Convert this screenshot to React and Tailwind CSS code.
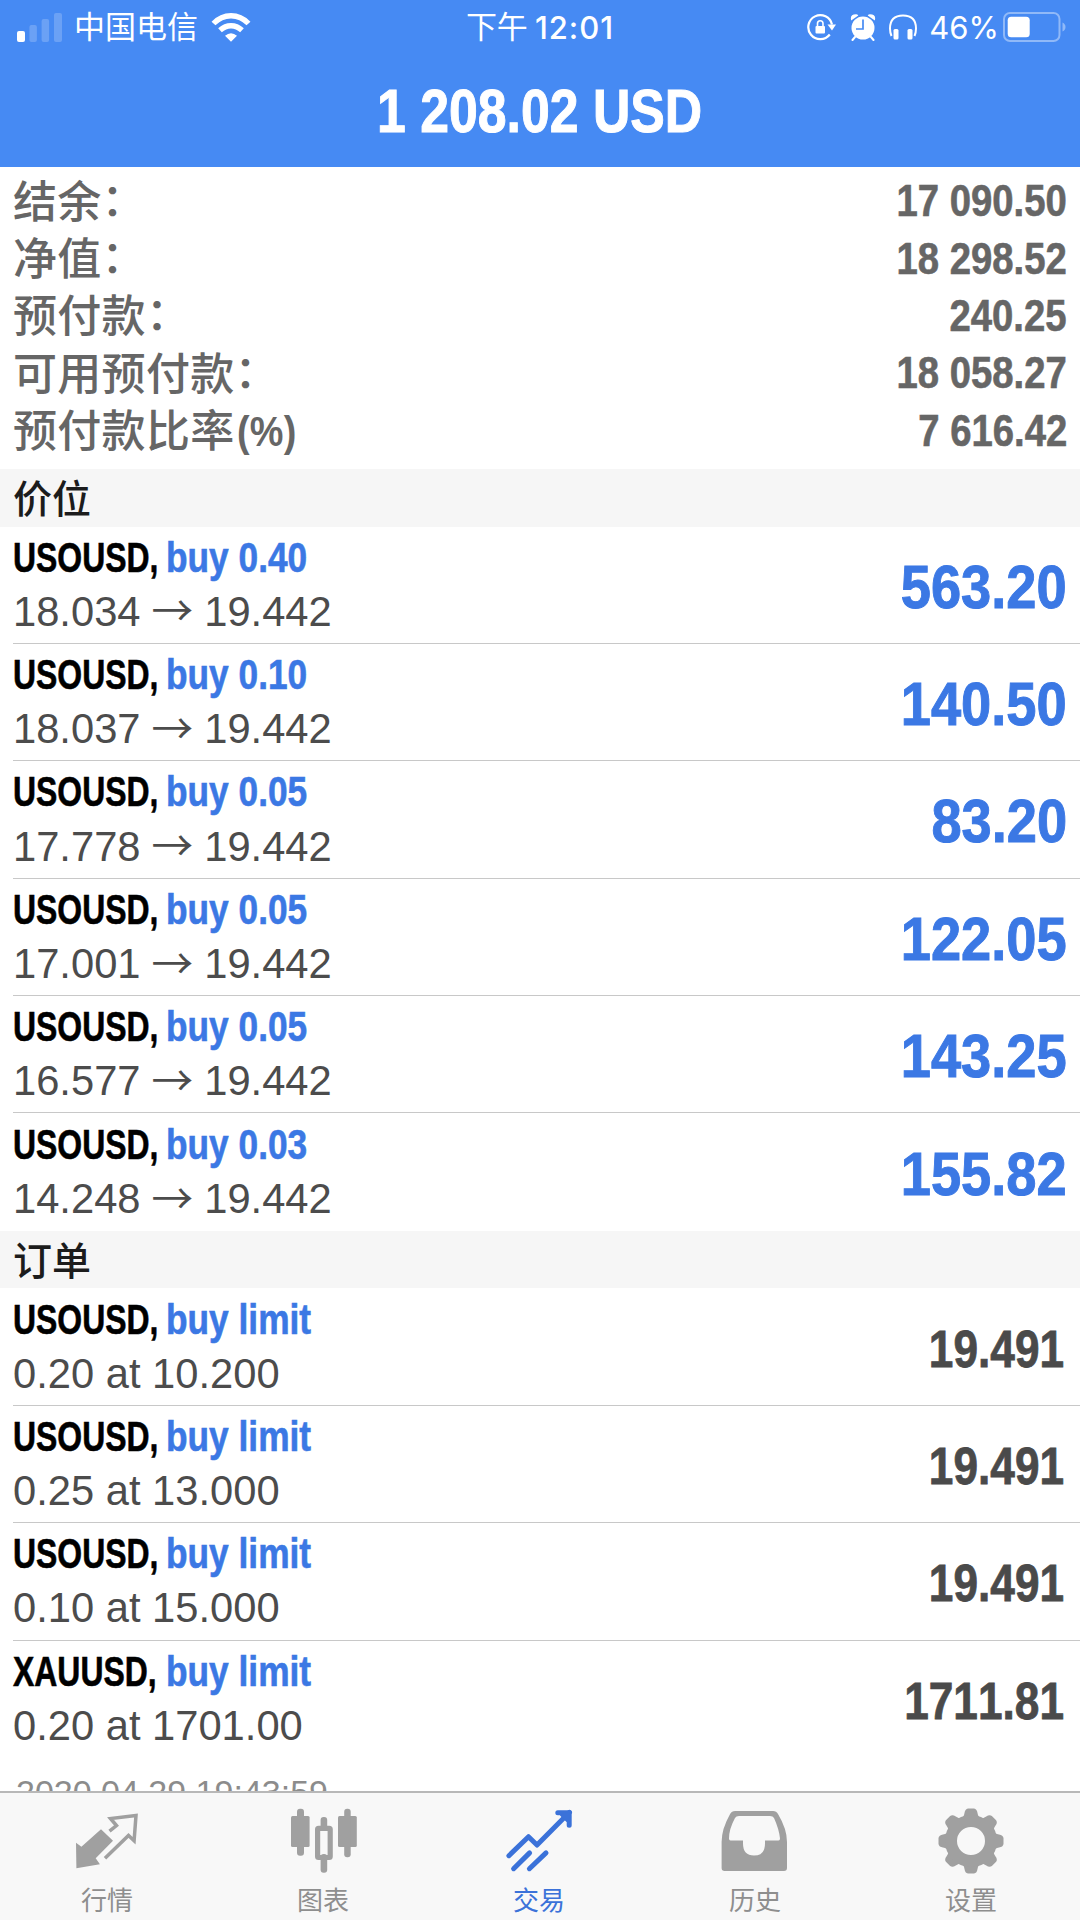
const balances = [
  { label: '结余', suffix: '：', value: '17 090.50' },
  { label: '净值', suffix: '：', value: '18 298.52' },
  { label: '预付款', suffix: '：', value: '240.25' },
  { label: '可用预付款', suffix: '：', value: '18 058.27' },
  { label: '预付款比率', suffix: '(%)', value: '7 616.42' },
];

const positions = [
  { id: 1, symbol: 'USOUSD', side: 'buy 0.40', open: '18.034', current: '19.442', profit: '563.20' },
  { id: 2, symbol: 'USOUSD', side: 'buy 0.10', open: '18.037', current: '19.442', profit: '140.50' },
  { id: 3, symbol: 'USOUSD', side: 'buy 0.05', open: '17.778', current: '19.442', profit: '83.20' },
  { id: 4, symbol: 'USOUSD', side: 'buy 0.05', open: '17.001', current: '19.442', profit: '122.05' },
  { id: 5, symbol: 'USOUSD', side: 'buy 0.05', open: '16.577', current: '19.442', profit: '143.25' },
  { id: 6, symbol: 'USOUSD', side: 'buy 0.03', open: '14.248', current: '19.442', profit: '155.82' },
];

const orders = [
  { id: 1, symbol: 'USOUSD', side: 'buy limit', detail: '0.20 at 10.200', price: '19.491' },
  { id: 2, symbol: 'USOUSD', side: 'buy limit', detail: '0.25 at 13.000', price: '19.491' },
  { id: 3, symbol: 'USOUSD', side: 'buy limit', detail: '0.10 at 15.000', price: '19.491' },
  { id: 4, symbol: 'XAUUSD', side: 'buy limit', detail: '0.20 at 1701.00', price: '1711.81' },
];

const QuotesIcon = () => (
  <svg viewBox="0 0 72 72" className="h-[72px] w-[72px]" fill="none">
    <path d="M4 38.7l5.4 4L29 25.3l12 11.4-17.3 17.6 4.2 6-23.5 4z" fill="currentColor" />
    <path
      d="M37.5 27.2l7-5.700-6-7L64 11.500l-1.900 25.300-5.600-5.300L33 54.200"
      stroke="currentColor"
      strokeWidth="3.5"
    />
  </svg>
);

const ChartIcon = () => (
  <svg viewBox="0 0 72 72" className="h-[72px] w-[72px]" fill="currentColor">
    <rect x="3" y="12" width="18.6" height="31" rx="1.5" />
    <rect x="9" y="4.7" width="7" height="47" rx="3" />
    <rect x="50" y="12" width="18.8" height="31" rx="1.5" />
    <rect x="56.2" y="4.7" width="6.5" height="48.6" rx="3" />
    <rect x="32.6" y="13" width="6.6" height="12" rx="3" />
    <rect x="32.6" y="50" width="6.6" height="18.7" rx="3" />
    <rect x="29.6" y="24.3" width="12.6" height="29.2" rx="1" fill="none" stroke="currentColor" strokeWidth="5.2" />
  </svg>
);

const TradeIcon = () => (
  <svg
    viewBox="0 0 72 72"
    className="h-[72px] w-[72px]"
    fill="none"
    stroke="currentColor"
    strokeWidth="5"
    strokeLinecap="round"
    strokeLinejoin="round"
  >
    <path d="M4.9 51.7L24.5 32.7l8.500 8.300L65.500 8.300" />
    <path d="M53.800 8.800h11.400v12.400M58 10l6 6" />
    <path d="M9.600 64.700l16-15.800M25.400 64.700L42 48.900" />
  </svg>
);

const HistoryIcon = () => (
  <svg viewBox="0 0 72 72" className="h-[72px] w-[72px]" fill="currentColor" fillRule="evenodd">
    <path d="M18.500 7h34.500q3.500 0 5 3 9 15 9 28v26q0 3-3 3H4.600q-3 0-3-3V38q0-13 8.500-28 1.500-3 5-3zM19 12q-3 0-4 2-6 11-6 20.500 0 2 1.500 2h12.500v3q0 12 11 12t11-12v-3h13.500q1.500 0 1.500-2-1-9.500-6-20.500-1-2-4-2z" />
  </svg>
);

const SettingsIcon = () => (
  <svg viewBox="0 0 72 72" className="h-[72px] w-[72px]">
    <g fill="currentColor">
      {[0, 45, 90, 135, 180, 225, 270, 315].map((angle) => (
        <path
          key={angle}
          transform={`rotate(${angle} 35 37)`}
          d="M24 16q4-3 4.500-7 .5-4 3.500-4.500h6q3 .5 3.500 4.500 .5 4 4.500 7z"
        />
      ))}
    </g>
    <circle cx="35" cy="37" r="20" fill="none" stroke="currentColor" strokeWidth="12" />
  </svg>
);

const tabs = [
  { label: '行情', icon: QuotesIcon },
  { label: '图表', icon: ChartIcon },
  { label: '交易', icon: TradeIcon, active: true },
  { label: '历史', icon: HistoryIcon },
  { label: '设置', icon: SettingsIcon },
];

const SignalIcon = () => (
  <svg viewBox="0 0 45 30" className="h-[30px] w-[45px]" fill="white">
    <rect x="0" y="19" width="8" height="11" rx="2" />
    <rect x="12.400" y="13" width="7.500" height="17" rx="2" opacity="0.2" />
    <rect x="24.600" y="7" width="7.500" height="23" rx="2" opacity="0.2" />
    <rect x="37" y="1" width="8" height="29" rx="2" opacity="0.2" />
  </svg>
);

const WifiIcon = () => (
  <svg viewBox="0 0 40 30" className="h-[30px] w-[40px]" fill="none" stroke="white" strokeWidth="5.400">
    <path d="M2.500 11.500Q10 3.700 20 3.700t17.500 7.800" />
    <path d="M9 18.300q5-4.600 11-4.600t11 4.600" />
    <path d="M14 23.800q6-5 12 0L20 29.800z" fill="white" stroke="none" />
  </svg>
);

const RotationLockIcon = () => (
  <svg viewBox="0 0 30 28" className="h-[28px] w-[30px]" fill="none" stroke="white">
    <path d="M22.800 21.500A12 12 0 1 1 25 11.500" strokeWidth="2.200" />
    <path d="M20.500 11.500h8.500l-4 6z" fill="white" stroke="none" />
    <rect x="8.500" y="13" width="9.500" height="7.500" rx="1" fill="white" stroke="none" />
    <path d="M10.500 13v-2.500a2.750 2.750 0 0 1 5.500 0V13" strokeWidth="1.600" />
  </svg>
);

const AlarmIcon = () => (
  <svg viewBox="0 0 26 28" className="h-[28px] w-[26px]" fill="white">
    <circle cx="13" cy="15" r="11.500" />
    <path d="M1.200 7.500Q-.5 1.500 6 1.300q1.600 0 2.300 1.200zM24.800 7.500Q26.500 1.500 20 1.300q-1.600 0-2.300 1.200z" />
    <path d="M5 24l-2.500 3M21 24l2.500 3" stroke="white" strokeWidth="2" strokeLinecap="round" />
    <path d="M13 6.500v9.500H6" fill="none" stroke="#468af3" strokeWidth="1.700" />
  </svg>
);

const HeadphonesIcon = () => (
  <svg viewBox="0 0 28 28" className="h-[28px] w-[28px]" fill="none" stroke="white">
    <path d="M2.500 23Q1 19.500 1 15.500 1 2.500 14 2.500t13 13q0 4-1.500 7.500" strokeWidth="2" />
    <rect x="4.500" y="16" width="5" height="10.500" rx="1.500" fill="white" stroke="none" />
    <rect x="18.500" y="16" width="5" height="10.500" rx="1.500" fill="white" stroke="none" />
  </svg>
);

const BatteryIcon = () => (
  <svg viewBox="0 0 64 30" className="h-[30px] w-[64px]">
    <rect x="1" y="1" width="55.500" height="28" rx="6" fill="none" stroke="white" strokeOpacity="0.4" strokeWidth="2" />
    <rect x="4.700" y="4.700" width="22" height="20.600" rx="3.500" fill="white" />
    <path d="M59.500 10.500q3 1.500 3 4.500t-3 4.500z" fill="white" opacity="0.4" />
  </svg>
);

const StatusBar = () => (
  <div className="flex h-[54px] items-center justify-between pl-[17px] pr-[13px] text-[31px] leading-none">
    <div className="flex w-[440px] items-center">
      <SignalIcon />
      <span className="ml-3 mr-[13px]">中国电信</span>
      <WifiIcon />
    </div>
    <div className="flex items-center pr-1">
      <span>下午</span>
      <span className="ml-[7px] font-['Inter'] font-medium tracking-[1px]">12:01</span>
    </div>
    <div className="flex w-[440px] items-center justify-end">
      <RotationLockIcon />
      <span className="ml-[13px]"><AlarmIcon /></span>
      <span className="ml-[13px]"><HeadphonesIcon /></span>
      <span className="ml-3 mr-[4px] font-['Inter']">46%</span>
      <BatteryIcon />
    </div>
  </div>
);

const SectionTitle = ({ children }) => (
  <h2 className="flex h-[57.500px] items-center bg-[#f6f6f6] pl-[13px] pt-[3px] text-[39px] font-medium leading-none text-[#1c1c1c]">
    {children}
  </h2>
);

const Row = ({ symbol, side, last, right, children }) => (
  <li className="flex h-[117.400px] pl-[13px]">
    <div className={`flex flex-1 items-center justify-between pr-[13px] ${last ? '' : 'border-b border-[#c8c8c8]'}`}>
      <div>
        <div className="flex h-[54px] items-center whitespace-nowrap text-[42px] font-bold leading-none [-webkit-text-stroke:0.6px_currentColor]">
          <div className="w-[153px]">
            <span className="block w-max origin-left scale-x-[0.76] text-black">{symbol},</span>
          </div>
          <span className="block origin-left scale-x-[0.84] text-[#3b78e4]">{side}</span>
        </div>
        <div className="flex h-[54px] items-center whitespace-nowrap text-[41.700px] leading-none text-[#4c4c4c]">{children}</div>
      </div>
      {right}
    </div>
  </li>
);

const TabBar = () => (
  <nav className="grid h-[129px] shrink-0 grid-cols-5 border-t-2 border-[#b8b8b8] bg-[#f8f8f8]">
    {tabs.map(({ label, icon: Icon, active }) => (
      <div
        key={label}
        className={`flex flex-col items-center pt-[11px] ${active ? 'text-[#3b72d9]' : 'text-[#a0a0a0]'}`}
      >
        <Icon />
        <span className={`mt-[12px] pr-[2px] text-[26px] leading-none ${active ? '' : 'text-[#8e8e8e]'}`}>{label}</span>
      </div>
    ))}
  </nav>
);

export default function App() {
  return (
    <div className="flex h-[1920px] w-[1080px] flex-col overflow-hidden bg-white font-['Liberation_Sans','Noto_Sans_CJK_SC',sans-serif] [font-kerning:none]">
      <header className="h-[167px] shrink-0 bg-[#468af3] text-white">
        <StatusBar />
        <h1 className="flex h-[113px] scale-x-[0.835] items-center justify-center pr-px text-[62px] font-bold leading-none [-webkit-text-stroke:1px_currentColor]">
          1 208.02 USD
        </h1>
      </header>

      <main className="min-h-0 flex-1 overflow-hidden">
        <dl className="h-[302px] px-[13px] pt-[5px] text-[44px] text-[#666]">
          {balances.map(({ label, suffix, value }) => (
            <div key={label} className="flex h-[57.400px] items-center justify-between leading-none">
              <dt className="flex items-center pt-[4px] font-medium tracking-[0.300px]">
                {label}
                {suffix === '：' ? (
                  <span className="mb-[4px]">{suffix}</span>
                ) : (
                  <span className="ml-[2px] origin-left scale-x-[0.9] text-[42px] font-bold">{suffix}</span>
                )}
              </dt>
              <dd className="origin-right scale-x-[0.87] pt-px font-bold [-webkit-text-stroke:0.6px_currentColor]">
                {value}
              </dd>
            </div>
          ))}
        </dl>

        <SectionTitle>价位</SectionTitle>
        <ul>
          {positions.map((p, i) => (
            <Row
              key={p.id}
              symbol={p.symbol}
              side={p.side}
              last={i === positions.length - 1}
              right={
                <span className="origin-right scale-x-[0.875] pt-1 text-[62px] font-bold leading-none text-[#3b78e4] [-webkit-text-stroke:1px_currentColor]">
                  {p.profit}
                </span>
              }
            >
              {p.open}
              <span className="mx-[11px] mb-[5px] font-['Noto_Sans_CJK_SC']">→</span>
              {p.current}
            </Row>
          ))}
        </ul>

        <SectionTitle>订单</SectionTitle>
        <ul>
          {orders.map((o, i) => (
            <Row
              key={o.id}
              symbol={o.symbol}
              side={o.side}
              last={i === orders.length - 1}
              right={
                <span className="mr-[3px] origin-right scale-x-[0.85] pt-1 text-[52px] font-bold leading-none text-[#4a4a4a] [-webkit-text-stroke:0.8px_currentColor]">
                  {o.price}
                </span>
              }
            >
              {o.detail}
            </Row>
          ))}
        </ul>
        <p className="pl-[16px] pt-[17px] text-[34px] leading-none text-[#8c8c8c]">2020.04.29 19:43:59</p>
      </main>

      <TabBar />
    </div>
  );
}
